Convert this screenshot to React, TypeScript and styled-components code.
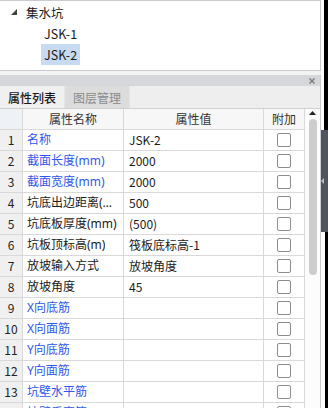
import React from 'react';
import styled, { createGlobalStyle } from 'styled-components';

const GlobalStyle = createGlobalStyle`
  html, body {
    margin: 0;
    padding: 0;
    background: #ffffff;
  }
  * {
    box-sizing: border-box;
  }
`;

const FONT = `"Noto Sans CJK SC", "Noto Sans", "Liberation Sans", sans-serif`;
const GRID = '#d9d9d9';

interface Prop {
  name: string;
  value?: string;
  blue?: boolean;
}

const props: Prop[] = [
  { name: '名称', value: 'JSK-2', blue: true },
  { name: '截面长度(mm)', value: '2000', blue: true },
  { name: '截面宽度(mm)', value: '2000', blue: true },
  { name: '坑底出边距离(mm)', value: '500' },
  { name: '坑底板厚度(mm)', value: '(500)' },
  { name: '坑板顶标高(m)', value: '筏板底标高-1' },
  { name: '放坡输入方式', value: '放坡角度' },
  { name: '放坡角度', value: '45' },
  { name: 'X向底筋', blue: true },
  { name: 'X向面筋', blue: true },
  { name: 'Y向底筋', blue: true },
  { name: 'Y向面筋', blue: true },
  { name: '坑壁水平筋', blue: true },
  { name: '坑壁垂直筋', blue: true },
];

const Screen = styled.div`
  width: 328px;
  height: 408px;
  overflow: hidden;
  display: flex;
  font-family: ${FONT};
  font-size: 12px;
  color: #1a1a1a;
`;

const Main = styled.div`
  width: 321px;
  display: flex;
  flex-direction: column;
  background: #f3f3f3;
`;

// 构件树
const TreePanel = styled.div`
  height: 71px;
  flex: none;
  background: #ffffff;
  border: 1px solid #c9cbd0;
  border-left: none;
  padding-top: 1px;
  display: flex;
  flex-direction: column;
`;

const TreeRow = styled.div<{ $indent: number }>`
  height: 21px;
  display: flex;
  align-items: center;
  padding-left: ${p => p.$indent}px;
`;

const Expander = styled.span`
  width: 12px;
  display: flex;
  align-items: center;
  padding-bottom: 2px;
`;

const TreeLabel = styled.span<{ $selected?: boolean }>`
  height: 21px;
  line-height: 21px;
  padding: 0 3px;
  font-size: 12.5px;
  background: ${p => (p.$selected ? '#c7daf1' : 'transparent')};
`;

const Gap = styled.div`
  height: 4px;
  flex: none;
`;

// 属性面板
const Panel = styled.div`
  flex: 1;
  display: flex;
  flex-direction: column;
  border-right: 1px solid #c9cbd0;
  min-height: 0;
`;

const TitleBar = styled.div`
  height: 11px;
  flex: none;
  background: #d5d7db;
  display: flex;
  justify-content: flex-end;
  align-items: center;
  padding-right: 5px;
`;

const TabStrip = styled.div`
  height: 23px;
  flex: none;
  display: flex;
  background: #eeeeee;
  border-bottom: 1px solid #cfcfcf;
`;

const Tab = styled.div<{ $active?: boolean }>`
  width: 65px;
  display: flex;
  align-items: center;
  justify-content: center;
  font-size: 12px;
  font-weight: ${p => (p.$active ? 500 : 400)};
  color: ${p => (p.$active ? '#1a1a1a' : '#8a8a8a')};
  background: ${p => (p.$active ? '#f0f0f0' : '#dcdcdc')};
  border-right: 1px solid #e6e6e6;
`;

const Body = styled.div`
  flex: 1;
  display: flex;
  min-height: 0;
  background: #ffffff;
`;

const Table = styled.div`
  width: 305px;
  display: grid;
  grid-template-columns: 23px 101px 140px 41px;
  grid-auto-rows: 21px;
  align-content: start;
`;

const Cell = styled.div`
  border-right: 1px solid ${GRID};
  border-bottom: 1px solid ${GRID};
  display: flex;
  align-items: center;
  white-space: nowrap;
  overflow: hidden;
  font-size: 12px;
  line-height: 20px;
`;

const HeadCell = styled(Cell)<{ $index?: boolean }>`
  justify-content: center;
  background: ${p => (p.$index ? '#eef1f5' : '#f7f7f7')};
  color: #333333;
`;

const IndexCell = styled(Cell)`
  justify-content: center;
  background: #f0f0f0;
  color: #222222;
`;

const NameCell = styled(Cell)<{ $blue?: boolean }>`
  padding-left: 4px;
  color: ${p => (p.$blue ? '#2f57ee' : '#1a1a1a')};
`;

const NameText = styled.span`
  overflow: hidden;
  text-overflow: ellipsis;
  font-family: "Noto Sans", "Noto Sans CJK SC", sans-serif;
`;

const ValueCell = styled(Cell)`
  padding-left: 5px;
`;

const CheckCell = styled(Cell)`
  justify-content: center;
`;

const CheckBox = styled.span`
  width: 14px;
  height: 14px;
  border: 1px solid #8c8c8c;
  border-radius: 2px;
  background: #ffffff;
`;

const ScrollBar = styled.div`
  width: 15px;
  display: flex;
  flex-direction: column;
  align-items: center;
  padding-top: 2px;
  gap: 4px;
  background: #fcfcfc;
`;

const Thumb = styled.div`
  width: 8px;
  height: 156px;
  border-radius: 4px;
  background: #cdcdcd;
  margin-left: 1px;
`;

// 右侧分隔条
const Edge = styled.div`
  width: 7px;
  display: flex;
  flex-direction: column;
`;

const EdgeTop = styled.div`
  height: 130px;
  background: #000000;
  border-left: 3px solid #ffffff;
`;

const Splitter = styled.div`
  height: 102px;
  background: #50555d;
  display: flex;
  align-items: center;
`;

const EdgeBottom = styled.div`
  flex: 1;
  background: #000000;
  border-left: 4px solid #ffffff;
`;

const App: React.FC = () => {
  return (
    <>
      <GlobalStyle />
      <Screen>
        <Main>
          <TreePanel>
            <TreeRow $indent={11}>
              <Expander>
                <svg width="6" height="6" viewBox="0 0 6 6">
                  <polygon points="6,0 6,6 0,6" fill="#404040" />
                </svg>
              </Expander>
              <TreeLabel>集水坑</TreeLabel>
            </TreeRow>
            <TreeRow $indent={41}>
              <TreeLabel>JSK-1</TreeLabel>
            </TreeRow>
            <TreeRow $indent={41}>
              <TreeLabel $selected>JSK-2</TreeLabel>
            </TreeRow>
          </TreePanel>
          <Gap />
          <Panel>
            <TitleBar>
              <svg width="6" height="6" viewBox="0 0 6 6">
                <path d="M0.5 0.5L5.5 5.5M5.5 0.5L0.5 5.5" stroke="#7a7a7a" strokeWidth="1.4" />
              </svg>
            </TitleBar>
            <TabStrip>
              <Tab $active>属性列表</Tab>
              <Tab>图层管理</Tab>
            </TabStrip>
            <Body>
              <Table>
                <HeadCell $index />
                <HeadCell>属性名称</HeadCell>
                <HeadCell>属性值</HeadCell>
                <HeadCell>附加</HeadCell>
                {props.map((p, i) => (
                  <React.Fragment key={i}>
                    <IndexCell>{i + 1}</IndexCell>
                    <NameCell $blue={p.blue}>
                      <NameText>{p.name}</NameText>
                    </NameCell>
                    <ValueCell>{p.value}</ValueCell>
                    <CheckCell>
                      <CheckBox />
                    </CheckCell>
                  </React.Fragment>
                ))}
              </Table>
              <ScrollBar>
                <svg width="7" height="4" viewBox="0 0 7 4">
                  <polygon points="3.5,0 7,4 0,4" fill="#222222" />
                </svg>
                <Thumb />
              </ScrollBar>
            </Body>
          </Panel>
        </Main>
        <Edge>
          <EdgeTop />
          <Splitter>
            <svg width="3" height="6" viewBox="0 0 3 6">
              <polygon points="3,0 3,6 0,3" fill="#b8bcc2" />
            </svg>
          </Splitter>
          <EdgeBottom />
        </Edge>
      </Screen>
    </>
  );
};

export default App;
